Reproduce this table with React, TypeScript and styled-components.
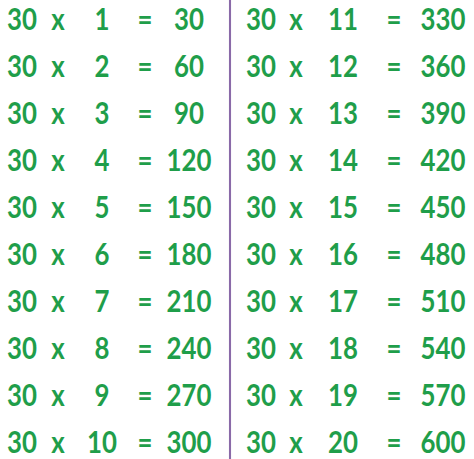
import React from "react";
import styled, { createGlobalStyle } from "styled-components";

const Global = createGlobalStyle`
  html, body {
    margin: 0;
    padding: 0;
    background: #ffffff;
  }
`;

const Sheet = styled.div`
  width: 474px;
  height: 459px;
  display: flex;
  overflow: hidden;
  background: #fff;
`;

const Half = styled.div<{ $cols: string; $pad: number; $w: number }>`
  width: ${(p) => p.$w}px;
  padding-left: ${(p) => p.$pad}px;
  box-sizing: border-box;
  display: grid;
  grid-template-columns: ${(p) => p.$cols};
  grid-auto-rows: 47px;
  align-content: start;
  margin-top: -6px;
`;

const Divider = styled.div`
  width: 2px;
  height: 459px;
  background: #8a6aa8;
  box-shadow: 0 0 1px #c9b5dc;
`;

const Cell = styled.div`
  display: flex;
  align-items: center;
  justify-content: center;
  font-family: "Lato", "Liberation Sans", sans-serif;
  font-weight: 700;
  font-size: 30px;
  color: #1f9e4a;
  white-space: nowrap;
  transform: scaleX(0.86);
`;

function Rows({ from }: { from: number }) {
  const rows = Array.from({ length: 10 }, (_, i) => from + i);
  return (
    <>
      {rows.map((n) => (
        <React.Fragment key={n}>
          <Cell>30</Cell>
          <Cell>x</Cell>
          <Cell>{n}</Cell>
          <Cell>=</Cell>
          <Cell>{30 * n}</Cell>
        </React.Fragment>
      ))}
    </>
  );
}

export default function App() {
  return (
    <Sheet>
      <Global />
      <Half $w={229} $pad={0} $cols="44px 28px 60px 26px 62px">
        <Rows from={1} />
      </Half>
      <Divider />
      <Half $w={243} $pad={8} $cols="44px 26px 68px 34px 64px">
        <Rows from={11} />
      </Half>
    </Sheet>
  );
}
